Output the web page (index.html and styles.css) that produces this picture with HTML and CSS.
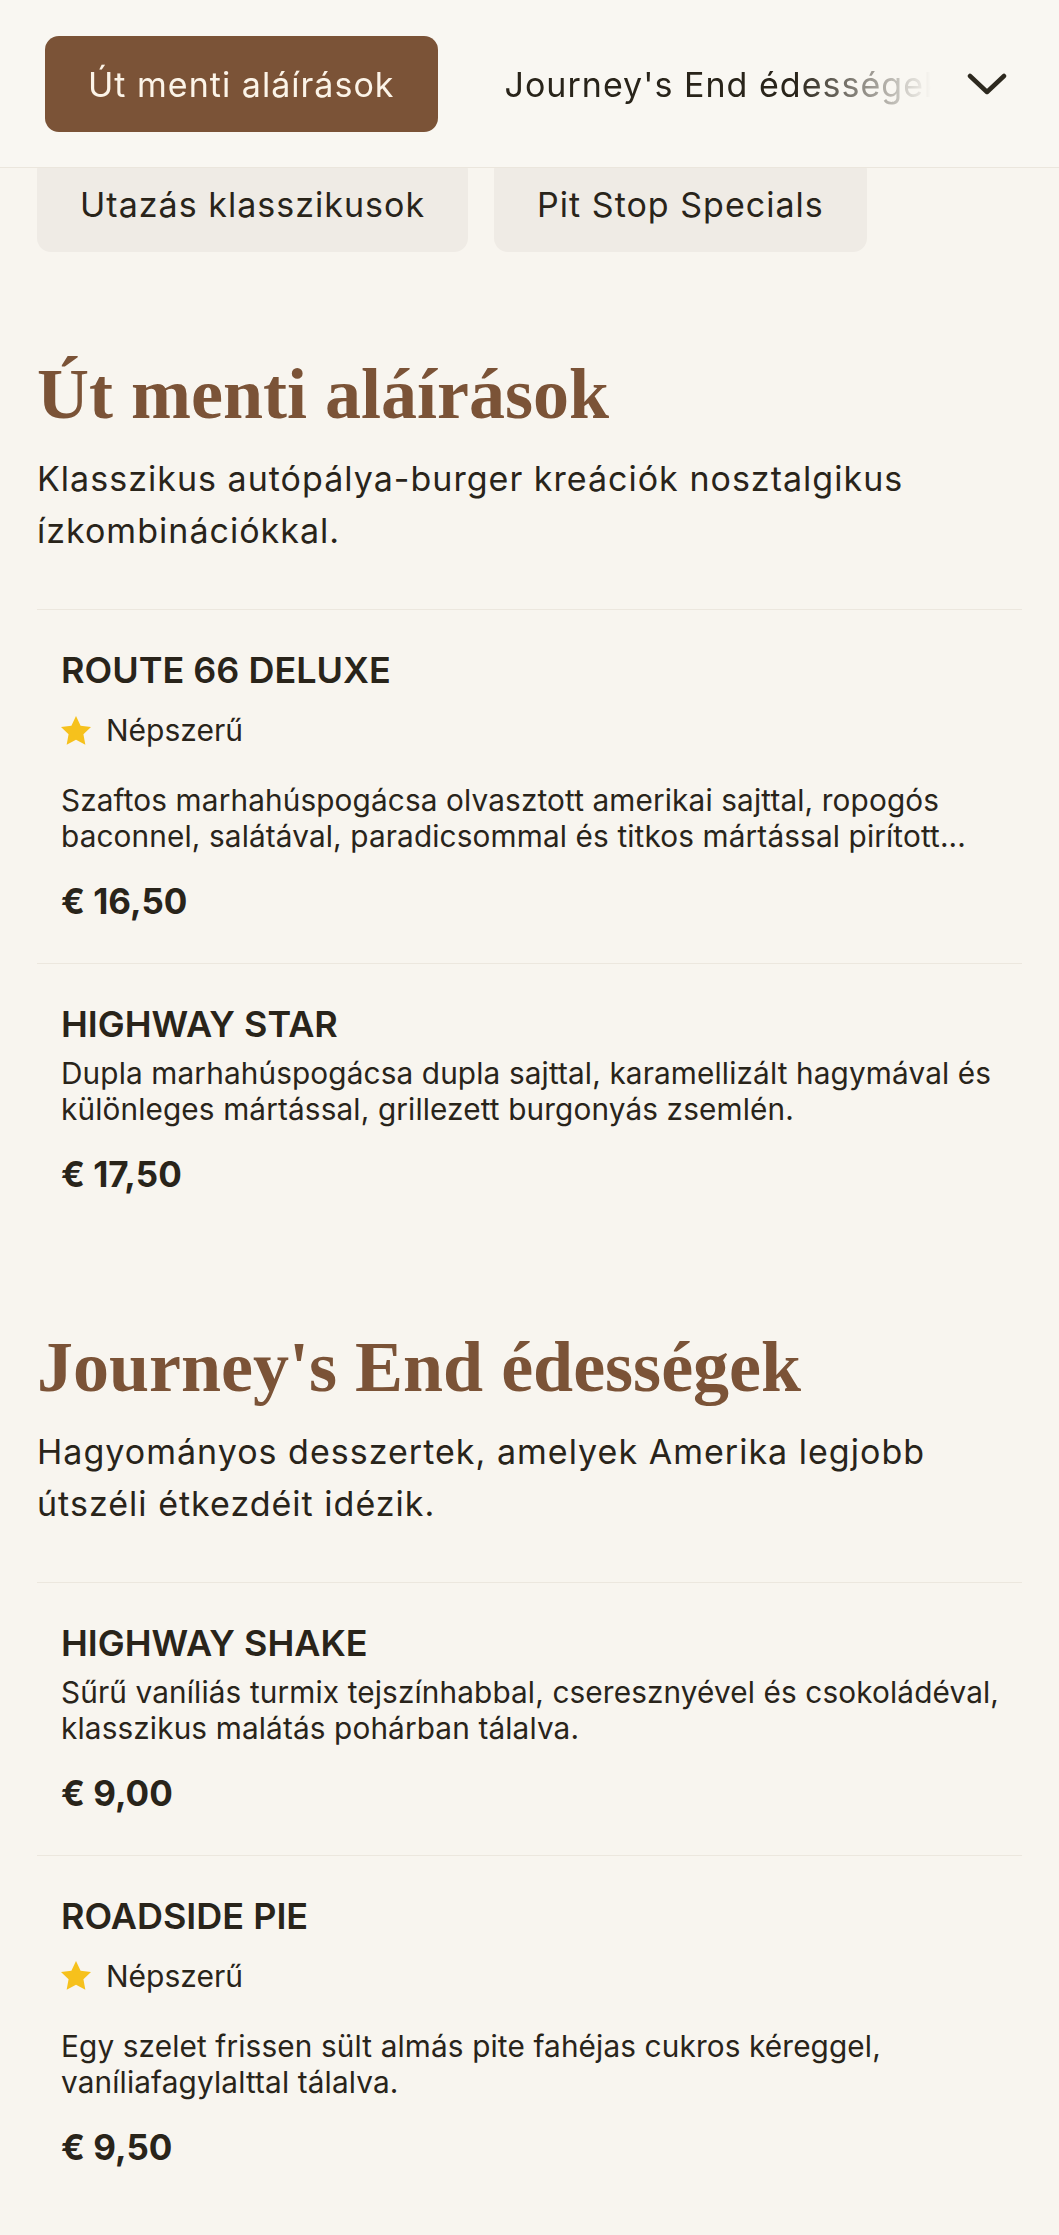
FILE: index.html
```html
<!DOCTYPE html>
<html lang="hu">
<head>
<meta charset="utf-8">
<title>Menü</title>
<link rel="stylesheet" href="styles.css">
</head>
<body>
<header class="topbar">
  <nav class="tabs">
    <a class="tab tab-active">Út menti aláírások</a>
    <a class="tab">Journey's End édességek</a>
    <a class="tab">Utazás klasszikusok</a>
    <a class="tab">Pit Stop Specials</a>
  </nav>
  <button class="expand" aria-label="Kategóriák">
    <svg class="chevron" viewBox="0 0 40 22" width="40" height="22"><polyline points="3,3 20,19 37,3" fill="none" stroke="currentColor" stroke-width="4.5" stroke-linecap="round" stroke-linejoin="round"/></svg>
  </button>
</header>

<main class="content">
  <div class="category-grid">
    <a class="chip">Utazás klasszikusok</a>
    <a class="chip">Pit Stop Specials</a>
  </div>

  <section class="menu-section">
    <h2 class="section-title">Út menti aláírások</h2>
    <p class="section-desc">Klasszikus autópálya-burger kreációk nosztalgikus ízkombinációkkal.</p>
    <ul class="items">
      <li class="item">
        <h3 class="item-name">ROUTE 66 DELUXE</h3>
        <div class="badge">
          <svg class="star" viewBox="1.9 1.8 20.2 19.4" width="30" height="29"><path d="M12 1.8l3.1 6.5 7 .9-5.1 4.9 1.3 7L12 17.7l-6.3 3.4 1.3-7L1.9 9.2l7-.9z" fill="currentColor"/></svg>
          <span>Népszerű</span>
        </div>
        <p class="item-desc">Szaftos marhahúspogácsa olvasztott amerikai sajttal, ropogós baconnel, salátával, paradicsommal és titkos mártással pirított...</p>
        <p class="price">€ 16,50</p>
      </li>
      <li class="item">
        <h3 class="item-name">HIGHWAY STAR</h3>
        <p class="item-desc">Dupla marhahúspogácsa dupla sajttal, karamellizált hagymával és különleges mártással, grillezett burgonyás zsemlén.</p>
        <p class="price">€ 17,50</p>
      </li>
    </ul>
  </section>

  <section class="menu-section">
    <h2 class="section-title">Journey's End édességek</h2>
    <p class="section-desc">Hagyományos desszertek, amelyek Amerika legjobb útszéli étkezdéit idézik.</p>
    <ul class="items">
      <li class="item">
        <h3 class="item-name">HIGHWAY SHAKE</h3>
        <p class="item-desc">Sűrű vaníliás turmix tejszínhabbal, cseresznyével és csokoládéval, klasszikus malátás pohárban tálalva.</p>
        <p class="price">€ 9,00</p>
      </li>
      <li class="item">
        <h3 class="item-name">ROADSIDE PIE</h3>
        <div class="badge">
          <svg class="star" viewBox="1.9 1.8 20.2 19.4" width="30" height="29"><path d="M12 1.8l3.1 6.5 7 .9-5.1 4.9 1.3 7L12 17.7l-6.3 3.4 1.3-7L1.9 9.2l7-.9z" fill="currentColor"/></svg>
          <span>Népszerű</span>
        </div>
        <p class="item-desc">Egy szelet frissen sült almás pite fahéjas cukros kéreggel, vaníliafagylalttal tálalva.</p>
        <p class="price">€ 9,50</p>
      </li>
    </ul>
  </section>
</main>
</body>
</html>
```

FILE: styles.css
```css
html, body {
  margin: 0;
  padding: 0;
}

body {
  background: #f8f5ef;
  color: #29241a;
  font-family: Inter, "Noto Sans", "Liberation Sans", sans-serif;
}

/* ---------- sticky top bar ---------- */
.topbar {
  position: sticky;
  top: 0;
  z-index: 2;
  display: flex;
  align-items: center;
  gap: 27px;
  padding: 36px 52px 35px 45px;
  background: #f9f7f2;
  border-bottom: 1px solid #ebe6dd;
}

.tabs {
  flex: 1;
  min-width: 0;
  display: flex;
  gap: 24px;
  overflow: hidden;
  -webkit-mask-image: linear-gradient(to right, #000 0, #000 84%, transparent 99%);
  mask-image: linear-gradient(to right, #000 0, #000 84%, transparent 99%);
}

.tab,
.chip {
  flex-shrink: 0;
  padding: 22.5px 43px;
  border-radius: 14px;
  font-size: 34px;
  line-height: 51px;
  letter-spacing: 0.03em;
  white-space: nowrap;
  color: #29241a;
  text-decoration: none;
}

.tab-active {
  background: #7b5337;
  color: #fcf4e8;
}

.expand {
  flex-shrink: 0;
  display: flex;
  padding: 0;
  border: 0;
  background: none;
  color: #2d291f;
}

/* ---------- content ---------- */
.content {
  padding: 0 37px 60px;
}

.category-grid {
  display: flex;
  gap: 26px;
  margin-top: -12px;
}

.chip {
  background: #efebe5;
}

.menu-section {
  margin-top: 99px;
}

.menu-section + .menu-section {
  margin-top: 87.5px;
}

.section-title {
  margin: 0;
  font-family: "Liberation Serif", "DejaVu Serif", serif;
  font-weight: 700;
  font-size: 72px;
  line-height: 86px;
  color: #7b5337;
}

.section-desc {
  margin: 16px 0 52px;
  font-size: 34px;
  line-height: 52px;
  letter-spacing: 0.03em;
}

.items {
  list-style: none;
  margin: 0;
  padding: 0;
}

.item {
  border-top: 1px solid #ece7de;
  padding: 38px 16px 40px 24px;
}

.item-name {
  margin: 0 0 9px;
  font-size: 36px;
  line-height: 44px;
  font-weight: 600;
}

.badge {
  display: flex;
  align-items: center;
  gap: 15px;
  margin: 18px 0 32px;
  font-size: 30px;
  line-height: 40px;
}

.star {
  color: #f6c11c;
  flex-shrink: 0;
}

.item-desc {
  margin: 0;
  font-size: 29.75px;
  line-height: 36px;
  letter-spacing: 0.13px;
  display: -webkit-box;
  -webkit-box-orient: vertical;
  -webkit-line-clamp: 2;
  overflow: hidden;
}

.price {
  margin: 25px 0 0;
  font-size: 35px;
  line-height: 44px;
  font-weight: 700;
}
```
